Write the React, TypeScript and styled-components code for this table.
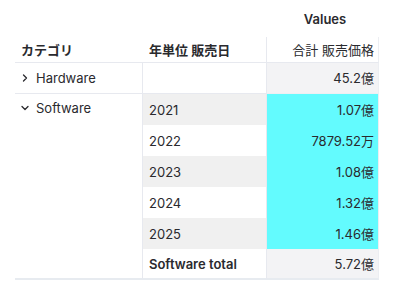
import styled, { createGlobalStyle } from "styled-components";
import { ChevronDown, ChevronRight } from "lucide-react";

const GlobalStyle = createGlobalStyle`
  body {
    margin: 0;
    background: #ffffff;
    font-family: Inter, "Noto Sans CJK JP", sans-serif;
    color: #2a2a2e;
  }
`;

type Year = { year: string; value: string };

const software: Year[] = [
  { year: "2021", value: "1.07億" },
  { year: "2022", value: "7879.52万" },
  { year: "2023", value: "1.08億" },
  { year: "2024", value: "1.32億" },
  { year: "2025", value: "1.46億" },
];

export default function App() {
  return (
    <Wrapper>
      <GlobalStyle />
      <PivotTable>
        <colgroup>
          <col style={{ width: 128 }} />
          <col style={{ width: 124 }} />
          <col style={{ width: 112 }} />
        </colgroup>
        <tbody>
          <tr>
            <TopCell />
            <TopCell />
            <ValuesCaption>Values</ValuesCaption>
          </tr>
          <tr>
            <HeadCell>カテゴリ</HeadCell>
            <HeadCell $divider>年単位 販売日</HeadCell>
            <HeadCell $align="right">合計 販売価格</HeadCell>
          </tr>
          <tr>
            <CategoryCell $rowLine>
              <Toggle>
                <ChevronRight size={12} strokeWidth={2.6} />
              </Toggle>
              Hardware
            </CategoryCell>
            <YearCell $rowLine />
            <ValueCell $tone="gray" $rowLine>
              45.2億
            </ValueCell>
          </tr>
          {software.map((row, i) => (
            <tr key={row.year}>
              {i === 0 && (
                <CategoryCell rowSpan={software.length + 1} $top $last>
                  <Toggle>
                    <ChevronDown size={12} strokeWidth={2.6} />
                  </Toggle>
                  Software
                </CategoryCell>
              )}
              <YearCell $shaded={i % 2 === 0}>{row.year}</YearCell>
              <ValueCell $tone="cyan">{row.value}</ValueCell>
            </tr>
          ))}
          <tr>
            <YearCell $total $last>
              Software total
            </YearCell>
            <ValueCell $tone="gray" $last>
              5.72億
            </ValueCell>
          </tr>
        </tbody>
      </PivotTable>
    </Wrapper>
  );
}

const Wrapper = styled.div`
  padding-left: 15px;
`;

const PivotTable = styled.table`
  border-collapse: separate;
  border-spacing: 0;
  table-layout: fixed;
  width: 364px;
  font-size: 13px;
  line-height: 16px;

  td {
    box-sizing: border-box;
    padding: 0 6px;
    white-space: nowrap;
  }
`;

const TopCell = styled.td`
  height: 37px;
`;

const ValuesCaption = styled.td`
  height: 37px;
  text-align: center;
  font-weight: 600;
  color: #2a2a2e;
  && {
    padding-left: 10px;
  }
`;

const HeadCell = styled.td<{ $align?: string; $divider?: boolean }>`
  height: 26px;
  font-weight: 600;
  text-align: ${(p) => p.$align || "left"};
  vertical-align: middle;
  border-bottom: 1px solid #e7e9ef;
  border-right: ${(p) => (p.$divider ? "1px solid #e7e9ef" : "none")};
  ${(p) => (p.$align === "right" ? "font-weight: 400; border-right: 1px solid #eceef2;" : "")}
  && {
    ${(p) => (p.$align === "right" ? "padding-right: 4px;" : "")}
  }
`;

const CategoryCell = styled.td<{ $rowLine?: boolean; $top?: boolean; $last?: boolean }>`
  height: 31px;
  vertical-align: ${(p) => (p.$top ? "top" : "middle")};
  border-right: 1px solid #e7e9ef;
  border-bottom: ${(p) =>
    p.$rowLine ? "1px solid #e7e9ef" : p.$last ? "2px solid #e7ebf0" : "none"};
  && {
    padding-top: ${(p) => (p.$top ? "6px" : "0")};
  }
`;

const Toggle = styled.span`
  display: inline-flex;
  width: 12px;
  margin-left: -2px;
  margin-right: 5px;
  vertical-align: -1px;
  color: #2a2a2e;
`;

const YearCell = styled.td<{
  $shaded?: boolean;
  $rowLine?: boolean;
  $total?: boolean;
  $last?: boolean;
}>`
  height: 31px;
  background: ${(p) => (p.$shaded ? "#f0f0f0" : "#ffffff")};
  font-weight: ${(p) => (p.$total ? 600 : 400)};
  border-right: 1px solid #e7e9ef;
  border-bottom: ${(p) =>
    p.$rowLine ? "1px solid #e7e9ef" : p.$last ? "2px solid #e7ebf0" : "none"};
`;

const toneColors: Record<string, string> = {
  gray: "#f3f3f5",
  cyan: "#63fbfe",
};

const ValueCell = styled.td<{
  $tone: string;
  $rowLine?: boolean;
  $last?: boolean;
}>`
  height: 31px;
  text-align: right;
  background: ${(p) => toneColors[p.$tone]};
  border-right: 1px solid #eceef2;
  border-bottom: ${(p) =>
    p.$rowLine ? "1px solid #eeeff3" : p.$last ? "2px solid #e7ebf0" : "none"};
  && {
    padding-right: 4px;
  }
`;
